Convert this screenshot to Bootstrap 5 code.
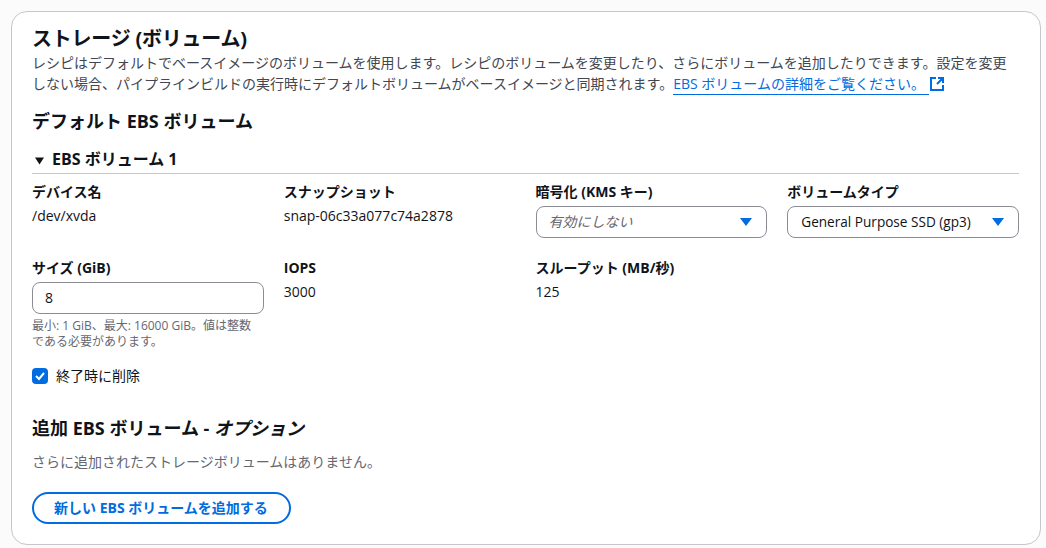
<!doctype html>
<html lang="ja"><head><meta charset="utf-8">
<link rel="stylesheet" href="https://cdn.jsdelivr.net/npm/bootstrap@5.3.0/dist/css/bootstrap.min.css">
<style>
html,body{height:100%}
body{background:#fbfbfb;color:#0f141a;font:14px/20px "Open Sans","Noto Sans CJK JP",sans-serif;padding:11px 5px 3px 11px;overflow:hidden}
.panel-box{background:#fff;border:1px solid #c6c6cd;border-radius:16px;height:534px;padding:14px 21px 0 20px}
.ttl{font-size:20px;line-height:26px;font-weight:700;margin:0;letter-spacing:-.23px}
.desc{color:#424650;margin:0;line-height:21px;width:985px}
.ext{color:#006ce0;text-decoration:none;border-bottom:1px solid #006ce0;padding-bottom:1px}
.sub{font-size:18px;line-height:24px;font-weight:700;margin:0}
.exp{font-weight:700;line-height:22px;border-bottom:1px solid #c6c6cd;padding-bottom:3px;font-size:16px}
.fgrid{display:grid;grid-template-columns:repeat(4,1fr);column-gap:20px}
.lbl{font-weight:700;line-height:20px;margin-bottom:4px}
.fake{height:32px;border:1px solid #8c8c94;border-radius:8px;padding:0 14px 0 12px;display:flex;align-items:center;justify-content:space-between;background:#fff}
.ph{color:#656871;font-style:italic}
.gen{font-size:13.6px;margin-left:1px}
.hint{font-size:12px;line-height:16px;color:#656871;margin-top:4px;padding-right:8px}
.tick{width:16px;height:16px;border-radius:4px;background:#006ce0;display:flex;align-items:center;justify-content:center}
.muted-line{color:#656871}
.pill{border:2px solid #006ce0;border-radius:20px;color:#006ce0;font-weight:700;height:32px;padding:0 21px 0 20px;background:#fff;line-height:20px;font-size:14px}
.xlink{vertical-align:-3px}
</style></head><body>
<div class="panel-box">
<h2 class="ttl">ストレージ (ボリューム)</h2>
<p class="desc">レシピはデフォルトでベースイメージのボリュームを使用します。レシピのボリュームを変更したり、さらにボリュームを追加したりできます。設定を変更しない場合、パイプラインビルドの実行時にデフォルトボリュームがベースイメージと同期されます。<a class="ext" href="#">EBS ボリュームの詳細をご覧ください。 </a> <svg class="xlink" width="16" height="16" viewBox="0 0 16 16" fill="none" stroke="#006ce0" stroke-width="2"><path d="M7 2H2v12h12V9M9 2h5v5M14 2L8 8"/></svg></p>
<h3 class="sub" style="margin-top:15px">デフォルト EBS ボリューム</h3>
<div class="exp" style="margin-top:15px"><svg width="12" height="10" viewBox="0 0 12 10" class="me-2"><path d="M3 1.5h9L7.5 8.5z" fill="#0f141a"/></svg>EBS ボリューム 1</div>
<div class="fgrid mt-2">
<div><div class="lbl">デバイス名</div><div>/dev/xvda</div></div>
<div><div class="lbl">スナップショット</div><div>snap-06c33a077c74a2878</div></div>
<div><div class="lbl">暗号化 (KMS キー)</div><div class="fake"><span class="ph">有効にしない</span><svg width="12" height="8" viewBox="0 0 12 8"><path d="M0 0h12L6 8z" fill="#006ce0"/></svg></div></div>
<div><div class="lbl">ボリュームタイプ</div><div class="fake"><span class="gen">General Purpose SSD (gp3)</span><svg width="12" height="8" viewBox="0 0 12 8"><path d="M0 0h12L6 8z" fill="#006ce0"/></svg></div></div>
</div>
<div class="fgrid" style="margin-top:20px">
<div><div class="lbl">サイズ (GiB)</div><div class="fake">8</div><div class="hint">最小: 1 GiB、最大: 16000 GiB。値は整数である必要があります。</div></div>
<div><div class="lbl">IOPS</div><div>3000</div></div>
<div><div class="lbl">スループット (MB/秒)</div><div>125</div></div>
</div>
<div class="d-flex align-items-center gap-2" style="margin-top:16px"><span class="tick"><svg width="12" height="12" viewBox="0 0 12 12" fill="none" stroke="#fff" stroke-width="2"><path d="M2 6l3 3 5-6"/></svg></span><span>終了時に削除</span></div>
<h3 class="sub" style="margin-top:30px">追加 EBS ボリューム - <i>オプション</i></h3>
<div class="muted-line" style="margin-top:12px">さらに追加されたストレージボリュームはありません。</div>
<button type="button" class="pill" style="margin-top:20px">新しい EBS ボリュームを追加する</button>
</div>
</body></html>
